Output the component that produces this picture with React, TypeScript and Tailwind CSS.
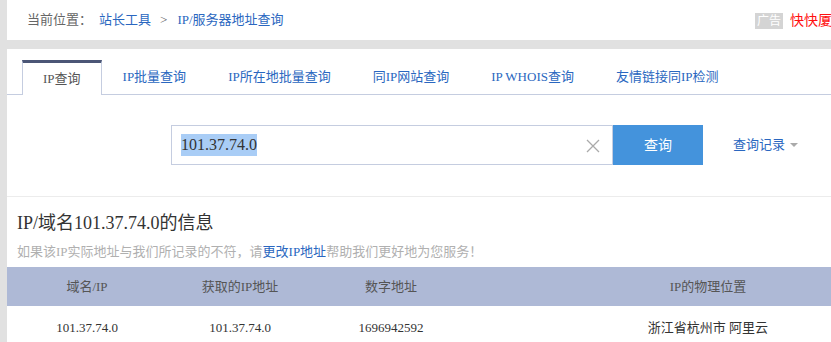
import React from "react";

const F = { fontFamily: '"Liberation Serif", "Noto Sans CJK SC", serif' };

export default function App() {
  const tabs = ["IP查询", "IP批量查询", "IP所在地批量查询", "同IP网站查询", "IP WHOIS查询", "友情链接同IP检测"];
  return (
    <div className="w-[831px] h-[342px] overflow-hidden bg-[#e1e1e1] pl-[7px]" style={F}>
      {/* breadcrumb bar */}
      <div className="h-[40px] bg-white flex items-center text-[13px] whitespace-nowrap">
        <span className="ml-[20px] text-[#666]">当前位置：</span>
        <span className="ml-[7px] text-[#2a67c0]">站长工具</span>
        <span className="ml-[9px] text-[#666]">&gt;</span>
        <span className="ml-[10px] text-[#2a67c0]">IP/服务器地址查询</span>
        <div className="flex-1" />
        <div className="w-[76px] overflow-hidden flex items-center pt-[1px]">
          <span className="bg-[#d4d4d4] text-white text-[12px] leading-[16px] px-[2px] shrink-0">广告</span>
          <span className="ml-[7px] text-[14px] text-[#ff1010] shrink-0">快快厦</span>
        </div>
      </div>

      {/* main panel */}
      <div className="mt-[9px] bg-white h-[300px]">
        {/* tabs */}
        <div className="pt-[11px] pl-[15px] flex border-b border-[#c5cde0] text-[13px] whitespace-nowrap">
          {tabs.map((t, i) =>
            i === 0 ? (
              <div
                key={t}
                className="h-[35px] px-[20px] flex items-center border-t-[3px] border-t-[#4b5676] border-x border-x-[#c5cde0] bg-white -mb-px text-[#555]"
              >
                {t}
              </div>
            ) : (
              <div key={t} className="h-[34px] px-[21px] flex items-center text-[#2a67c0]">
                {t}
              </div>
            )
          )}
        </div>

        {/* search */}
        <div className="pt-[30px] pb-[31px] pl-[164px] flex items-center border-b border-[#ececec]">
          <div className="w-[442px] h-[40px] border border-[#c5cde0] flex items-center pl-[9px] pr-[12px]">
            <span className="bg-[#a9cdf6] text-[16px] text-[#333] leading-[22px]">101.37.74.0</span>
            <div className="flex-1" />
            <svg width="14" height="14" viewBox="0 0 14 14" className="mt-[1px]">
              <path d="M1 1 L13 13 M13 1 L1 13" stroke="#aaa" strokeWidth="1.3" fill="none" />
            </svg>
          </div>
          <div className="w-[90px] h-[40px] bg-[#4493dc] text-white text-[14px] flex items-center justify-center">
            查询
          </div>
          <div className="ml-[30px] flex items-center text-[13px] text-[#2a67c0]">
            查询记录
            <span className="ml-[5px] w-0 h-0 border-x-[4px] border-x-transparent border-t-[4px] border-t-[#aaa]" />
          </div>
        </div>

        {/* info */}
        <div className="pl-[10px] pt-[14px]">
          <div className="text-[18px] leading-[24px] text-[#333]">IP/域名101.37.74.0的信息</div>
          <div className="mt-[7px] text-[13px] leading-[20px] text-[#b0b0b0] whitespace-nowrap">
            如果该IP实际地址与我们所记录的不符，请<span className="text-[#2a67c0]">更改IP地址</span>帮助我们更好地为您服务！
          </div>
        </div>

        {/* table */}
        <div className="mt-[5px] text-[13px]">
          <div className="grid grid-cols-[160px_146px_156px_116px_246px] h-[39px] bg-[#aeb9d6] text-[#555] items-center text-center">
            <div>域名/IP</div>
            <div>获取的IP地址</div>
            <div>数字地址</div>
            <div />
            <div>IP的物理位置</div>
          </div>
          <div className="grid grid-cols-[160px_146px_156px_116px_246px] h-[44px] items-center text-center text-[#333]">
            <div>101.37.74.0</div>
            <div>101.37.74.0</div>
            <div>1696942592</div>
            <div />
            <div>浙江省杭州市 阿里云</div>
          </div>
        </div>
      </div>
    </div>
  );
}
